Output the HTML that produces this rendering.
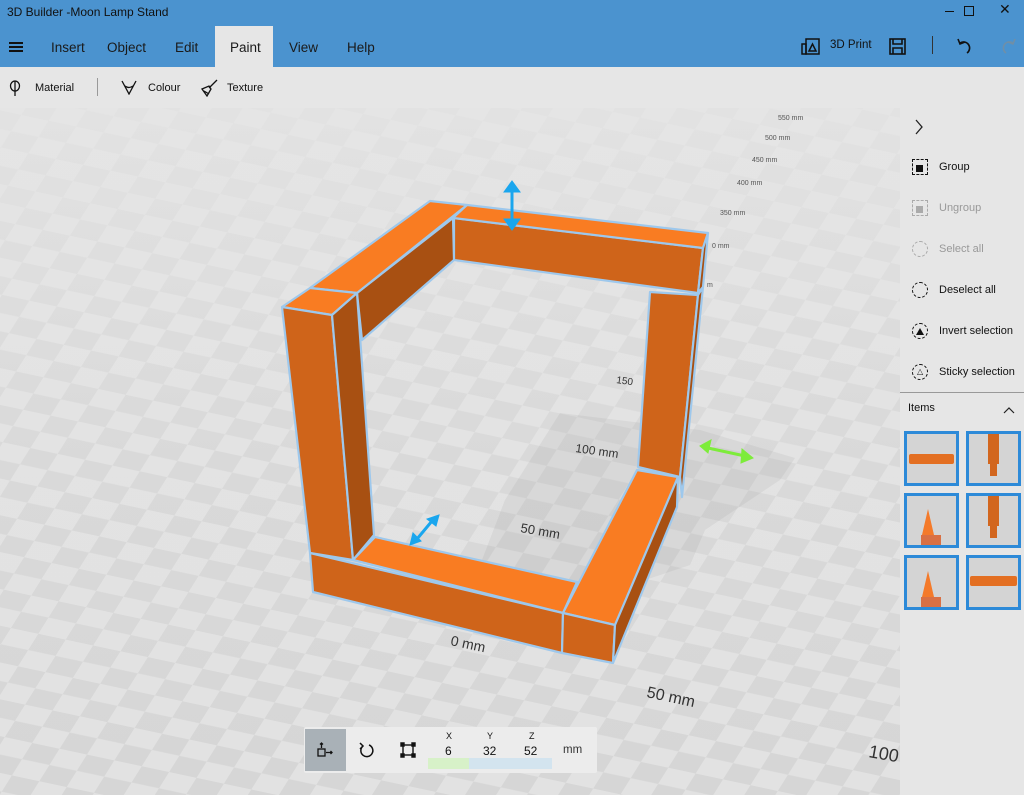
<!DOCTYPE html>
<html><head><meta charset="utf-8"><style>
*{margin:0;padding:0;box-sizing:border-box}
html,body{width:1024px;height:795px;overflow:hidden}
body{font-family:"Segoe UI","Liberation Sans",sans-serif;background:#e0e0e0;position:relative;color:#111}
.title{position:absolute;left:0;top:0;width:1024px;height:67px;background:#4b93cf}
.title .t{position:absolute;left:7px;top:5px;font-size:12px;color:#111}
.tab{position:absolute;top:40px;font-size:13.5px;color:#1a1a1a}
.paint{position:absolute;left:215px;top:26px;width:58px;height:41px;background:#e6e6e6}
.tb{position:absolute;left:0;top:67px;width:1024px;height:41px;background:#e6e6e6;font-size:11px}
.vp{position:absolute;left:0;top:108px;width:900px;height:687px;overflow:hidden;background:#e2e2e2}
.rp{position:absolute;left:900px;top:108px;width:124px;height:687px;background:#e6e6e6;font-size:11px}
.rp .it{position:absolute;left:39px}
.rp .ic{position:absolute;left:12px;width:16px;height:16px}
.th{position:absolute;width:55px;height:55px;border:3px solid #2d8ad8;background:#d4d4d4;overflow:hidden}
.bt{position:absolute;left:304px;top:727px;width:293px;height:46px;background:#ececec;border-radius:2px}
</style></head><body>
<div class="title">
<div class="t">3D Builder -Moon Lamp Stand</div>
<div style="position:absolute;left:945px;top:11px;width:9px;height:1px;background:#111"></div>
<div style="position:absolute;left:964px;top:6px;width:10px;height:10px;border:1px solid #111"></div>
<div style="position:absolute;left:999px;top:1px;font-size:14px">✕</div>
<div class="paint"></div>
<div style="position:absolute;left:9px;top:42px;width:14px;height:2px;background:#111;box-shadow:0 4px 0 #111,0 8px 0 #111"></div>
<div class="tab" style="left:51px">Insert</div>
<div class="tab" style="left:107px">Object</div>
<div class="tab" style="left:175px">Edit</div>
<div class="tab" style="left:230px">Paint</div>
<div class="tab" style="left:289px">View</div>
<div class="tab" style="left:347px">Help</div>
<svg style="position:absolute;left:801px;top:37px" width="20" height="18" viewBox="0 0 20 18" fill="none" stroke="#111" stroke-width="1.5"><rect x="1" y="7" width="4" height="10"/><rect x="5" y="2" width="13" height="15"/><path d="M8 14 L11.5 7 L15 14Z"/></svg>
<div style="position:absolute;left:830px;top:39px;font-size:11.5px">3D Print</div>
<svg style="position:absolute;left:889px;top:38px" width="17" height="17" viewBox="0 0 17 17" fill="none" stroke="#111" stroke-width="1.6"><rect x="1" y="1" width="15" height="15"/><path d="M4 1V6H13V1M4 16V10H13V16"/></svg>
<div style="position:absolute;left:932px;top:36px;width:1px;height:18px;background:#333"></div>
<svg style="position:absolute;left:957px;top:36px" width="18" height="20" viewBox="0 0 18 20" fill="none" stroke="#111" stroke-width="1.6"><path d="M3 7 A6 6 0 1 1 10 17 M1 3 L3 8 L8 6"/></svg>
<svg style="position:absolute;left:998px;top:36px" width="18" height="20" viewBox="0 0 18 20" fill="none" stroke="#6f8fa8" stroke-width="1.6"><path d="M15 7 A6 6 0 1 0 8 17 M17 3 L15 8 L10 6"/></svg>
</div>
<div class="tb">
<svg style="position:absolute;left:9px;top:13px" width="12" height="16" viewBox="0 0 12 16" fill="none" stroke="#111" stroke-width="1.3"><ellipse cx="6" cy="6" rx="4.5" ry="5"/><path d="M6 1V16"/></svg>
<div style="position:absolute;left:35px;top:15px">Material</div>
<div style="position:absolute;left:97px;top:11px;width:1px;height:18px;background:#999"></div>
<svg style="position:absolute;left:121px;top:12px" width="16" height="16" viewBox="0 0 16 16" fill="none" stroke="#111" stroke-width="1.3"><path d="M1 2 L8 15 L15 2 M4 7 Q8 10 12 7"/></svg>
<div style="position:absolute;left:148px;top:15px">Colour</div>
<svg style="position:absolute;left:200px;top:12px" width="18" height="18" viewBox="0 0 18 18" fill="none" stroke="#111" stroke-width="1.3"><path d="M17 1 L9 9 M2 10 L9 7 L11 10 L7 17 Z M4 12 L9 15"/></svg>
<div style="position:absolute;left:227px;top:15px">Texture</div>
</div>
<div class="vp">
<svg style="position:absolute;left:0;top:0" width="900" height="687" viewBox="0 108 900 687">
<defs>
<pattern id="ck" width="56" height="36" patternUnits="userSpaceOnUse" patternTransform="rotate(12) skewX(-20)">
<rect width="56" height="36" fill="#e2e2e2"/><rect width="28" height="18" fill="#d6d6d6"/><rect x="28" y="18" width="28" height="18" fill="#d6d6d6"/>
</pattern>
<linearGradient id="fd" x1="0" y1="0" x2="0" y2="1"><stop offset="0" stop-color="#e6e6e6" stop-opacity="0.75"/><stop offset="0.5" stop-color="#e6e6e6" stop-opacity="0.2"/><stop offset="1" stop-color="#e6e6e6" stop-opacity="0"/></linearGradient>
</defs>
<rect x="0" y="108" width="900" height="687" fill="url(#ck)"/>
<rect x="0" y="108" width="900" height="687" fill="url(#fd)"/>
<polygon points="560,413 700,430 795,458 780,480 705,530 690,565 600,595 480,565 505,500" fill="#8a8a8a" opacity="0.12"/>
<g font-family="Liberation Sans,sans-serif" fill="#333">
<text x="575" y="452" font-size="12" transform="rotate(8 575 452)">100 mm</text>
<text x="520" y="532" font-size="13" transform="rotate(10 520 532)">50 mm</text>
<text x="450" y="645" font-size="14" transform="rotate(12 450 645)">0 mm</text>
<text x="646" y="697" font-size="16" transform="rotate(12 646 697)">50 mm</text>
<text x="868" y="757" font-size="18" transform="rotate(10 868 757)">100</text>
<text x="616" y="383" font-size="10" transform="rotate(8 616 383)">150</text>
<g font-size="7" fill="#555"><text x="720" y="215">350 mm</text><text x="737" y="185">400 mm</text><text x="752" y="162">450 mm</text><text x="765" y="140">500 mm</text><text x="778" y="120">550 mm</text><text x="712" y="248">0 mm</text><text x="707" y="287">m</text></g>
</g>
<g stroke="#9ec8ec" stroke-width="2.2" stroke-linejoin="round">
<polygon points="650,292 698,295 680,477 638,467" fill="#cf641a"/>
<polygon points="698,295 703,287 682,497 680,477" fill="#a85012"/>
<polygon points="454,218 703,248 698,293 454,260" fill="#cf641a"/>
<polygon points="453,218 467,205 708,233 703,248" fill="#f97c22"/>
<polygon points="703,248 708,233 703,287 698,293" fill="#a85012"/>
<polygon points="357,293 453,218 454,260 362,340" fill="#a85012"/>
<polygon points="310,288 430,201 467,205 357,293" fill="#f97c22"/>
<polygon points="282,307 310,288 357,293 332,315" fill="#f97c22"/>
<polygon points="282,307 332,315 353,560 310,553" fill="#cf641a"/>
<polygon points="332,315 357,293 374,535 353,560" fill="#a85012"/>
<polygon points="353,560 375,537 577,582 563,613" fill="#f97c22"/>
<polygon points="310,553 563,613 562,653 313,592" fill="#cf641a"/>
<polygon points="563,613 637,470 678,477 615,625" fill="#f97c22"/>
<polygon points="563,613 615,625 613,663 562,653" fill="#cf641a"/>
<polygon points="615,625 678,477 677,507 613,663" fill="#a85012"/>
</g>
<g fill="#1aa6ee" stroke="#1aa6ee" stroke-width="3">
<path d="M512 188 V222"/><path d="M504 192 L512 181 L520 192Z M504 219 L512 230 L520 219Z" stroke-width="1"/>
<path d="M417 539 L432 521"/><path d="M410 545 L413 533 L421 541Z M439 515 L427 519 L436 526Z" stroke-width="1"/>
</g>
<g fill="#7dec3a" stroke="#7dec3a" stroke-width="3">
<path d="M708 448 L745 456"/><path d="M700 446 L711 440 L708 453Z M753 458 L742 449 L741 463Z" stroke-width="1"/>
</g>
</svg>
</div>
<div class="rp">
<svg style="position:absolute;left:14px;top:11px" width="10" height="16" viewBox="0 0 10 16" fill="none" stroke="#222" stroke-width="1.3"><path d="M2 1 L8 8 L2 15"/></svg>
<div class="ic" style="top:51px;border:1px dashed #111"><div style="position:absolute;left:3px;top:5px;width:7px;height:7px;background:#111"></div></div>
<div class="it" style="top:53px">Group</div>
<div class="ic" style="top:92px;border:1px dashed #aaa"><div style="position:absolute;left:3px;top:5px;width:7px;height:7px;background:#aaa"></div></div>
<div class="it" style="top:94px;color:#999">Ungroup</div>
<div class="ic" style="top:133px;border:1px dashed #aaa;border-radius:50%"></div>
<div class="it" style="top:135px;color:#999">Select all</div>
<div class="ic" style="top:174px;border:1px dashed #111;border-radius:50%"></div>
<div class="it" style="top:176px">Deselect all</div>
<div class="ic" style="top:215px;border:1px dashed #111;border-radius:50%"><div style="position:absolute;left:3px;top:4px;width:0;height:0;border-left:4px solid transparent;border-right:4px solid transparent;border-bottom:7px solid #111"></div></div>
<div class="it" style="top:217px">Invert selection</div>
<div class="ic" style="top:256px;border:1px dashed #111;border-radius:50%"><div style="position:absolute;left:4px;top:3px;font-size:8px;line-height:8px">△</div></div>
<div class="it" style="top:258px">Sticky selection</div>
<div style="position:absolute;left:0;top:284px;width:124px;height:1px;background:#999"></div>
<div style="position:absolute;left:8px;top:294px">Items</div>
<svg style="position:absolute;left:103px;top:298px" width="12" height="8" viewBox="0 0 12 8" fill="none" stroke="#222" stroke-width="1.2"><path d="M1 7 L6 2 L11 7"/></svg>
<div class="th" style="left:4px;top:323px"><div style="position:absolute;left:2px;top:20px;width:45px;height:10px;background:#e36f22;border-radius:2px"></div></div>
<div class="th" style="left:66px;top:323px"><div style="position:absolute;left:19px;top:0;width:11px;height:30px;background:#d2661e"></div><div style="position:absolute;left:21px;top:30px;width:7px;height:12px;background:#d2661e"></div></div>
<div class="th" style="left:4px;top:385px"><div style="position:absolute;left:15px;top:13px;border-left:6px solid transparent;border-right:6px solid transparent;border-bottom:26px solid #f47a2a;width:6px"></div><div style="position:absolute;left:14px;top:39px;width:20px;height:10px;background:#d97044"></div></div>
<div class="th" style="left:66px;top:385px"><div style="position:absolute;left:19px;top:0;width:11px;height:30px;background:#d2661e"></div><div style="position:absolute;left:21px;top:30px;width:7px;height:12px;background:#d2661e"></div></div>
<div class="th" style="left:4px;top:447px"><div style="position:absolute;left:15px;top:13px;border-left:6px solid transparent;border-right:6px solid transparent;border-bottom:26px solid #f47a2a;width:6px"></div><div style="position:absolute;left:14px;top:39px;width:20px;height:10px;background:#d97044"></div></div>
<div class="th" style="left:66px;top:447px"><div style="position:absolute;left:1px;top:18px;width:47px;height:10px;background:#e36f22;border-radius:2px"></div></div>
</div>
<div class="bt">
<div style="position:absolute;left:1px;top:2px;width:41px;height:42px;background:#a9b1b7"></div>
<svg style="position:absolute;left:13px;top:15px" width="18" height="16" viewBox="0 0 18 16" fill="none" stroke="#111" stroke-width="1.3"><rect x="1" y="7" width="7" height="7"/><path d="M4.5 6V1 M3 2.5 L4.5 1 L6 2.5 M9 10.5H15 M13.5 9 L15 10.5 L13.5 12"/></svg>
<svg style="position:absolute;left:55px;top:14px" width="16" height="18" viewBox="0 0 16 18" fill="none" stroke="#111" stroke-width="1.5"><path d="M10 4 A6 6 0 1 1 4 5 M1 2 L4 5 L1 8"/></svg>
<svg style="position:absolute;left:96px;top:15px" width="16" height="16" viewBox="0 0 16 16" fill="none" stroke="#111" stroke-width="1.4"><rect x="3" y="3" width="10" height="10"/><path d="M1 1h3v3H1zM12 1h3v3h-3zM1 12h3v3H1zM12 12h3v3h-3z" fill="#111"/></svg>
<div style="position:absolute;left:124px;top:31px;width:41px;height:11px;background:#d7f1c8"></div>
<div style="position:absolute;left:165px;top:31px;width:83px;height:11px;background:#d3e4ef"></div>
<div style="position:absolute;left:142px;top:4px;font-size:9px">X</div>
<div style="position:absolute;left:141px;top:17px;font-size:12px">6</div>
<div style="position:absolute;left:183px;top:4px;font-size:9px">Y</div>
<div style="position:absolute;left:179px;top:17px;font-size:12px">32</div>
<div style="position:absolute;left:225px;top:4px;font-size:9px">Z</div>
<div style="position:absolute;left:220px;top:17px;font-size:12px">52</div>
<div style="position:absolute;left:259px;top:17px;font-size:11.5px;color:#333">mm</div>
</div>
</body></html>
